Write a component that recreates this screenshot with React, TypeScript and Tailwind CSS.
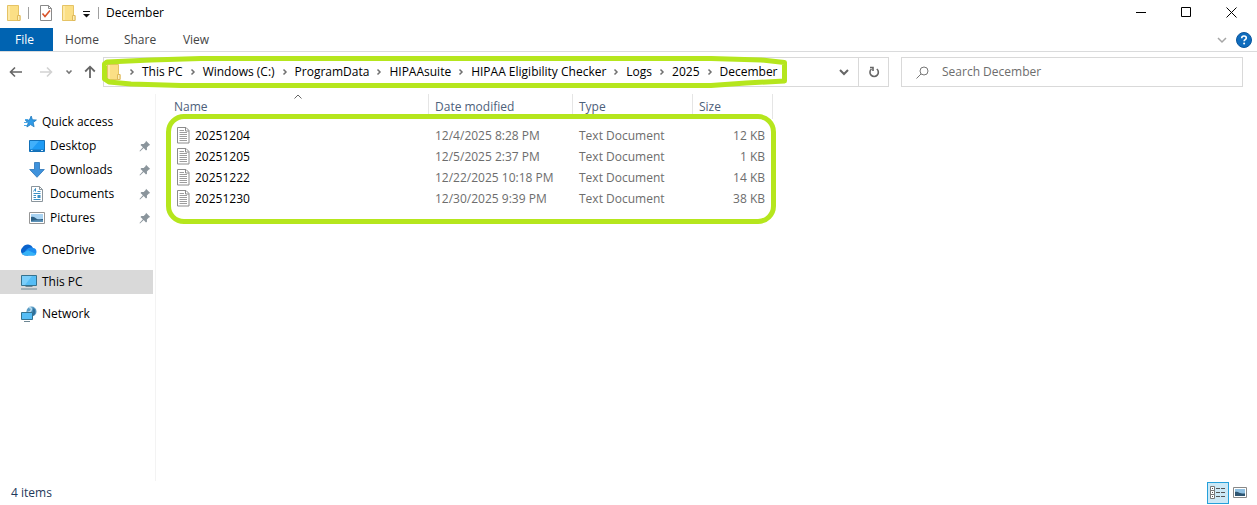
import type { ReactNode } from 'react';

interface LogFile {
  name: string;
  modified: string;
  type: string;
  size: string;
}

const files: LogFile[] = [
  { name: '20251204', modified: '12/4/2025 8:28 PM', type: 'Text Document', size: '12 KB' },
  { name: '20251205', modified: '12/5/2025 2:37 PM', type: 'Text Document', size: '1 KB' },
  { name: '20251222', modified: '12/22/2025 10:18 PM', type: 'Text Document', size: '14 KB' },
  { name: '20251230', modified: '12/30/2025 9:39 PM', type: 'Text Document', size: '38 KB' },
];

const crumbs = [
  'This PC',
  'Windows (C:)',
  'ProgramData',
  'HIPAAsuite',
  'HIPAA Eligibility Checker',
  'Logs',
  '2025',
  'December',
];

function FolderIcon() {
  return (
    <svg width="14" height="18" viewBox="0 0 14 18" className="shrink-0" aria-hidden="true">
      <path d="M.5 1.5h11v10h1.5v5H.5z" fill="#fbdf85" stroke="#e5c365" />
      <path d="M10.5 11.5h2.5v5h-2.5z" fill="#fdeeb4" stroke="#dfb95a" />
      <path d="M1 2h2v14H1z" fill="#fde9a6" />
    </svg>
  );
}

function CheckedPageIcon() {
  return (
    <svg width="14" height="18" viewBox="0 0 14 18" aria-hidden="true">
      <path d="M1.5 1.5h8l3 3v12h-11z" fill="#fff" stroke="#8a8a8a" />
      <path d="M9.5 1.5v3h3" fill="none" stroke="#8a8a8a" />
      <path d="m3.5 9.5 2.5 3L11 6.5" fill="none" stroke="#d9542b" strokeWidth="1.6" />
    </svg>
  );
}

function TextFileIcon() {
  return (
    <svg width="13" height="17" viewBox="0 0 13 17" className="shrink-0" aria-hidden="true">
      <path d="M.5.5h8.5l3 3v12.5H.5z" fill="#fff" stroke="#8c8c8c" />
      <path d="M8.5.5v3.5H12" fill="none" stroke="#8c8c8c" />
      <path d="M2.5 3.5H7M2.5 5.5h7.5M2.5 7.5h7.5M2.5 9.5h7.5M2.5 11.5h7.5M2.5 13.5h7.5" stroke="#9d9d9d" />
    </svg>
  );
}

function StarIcon() {
  return (
    <svg width="16" height="16" viewBox="0 0 16 16" aria-hidden="true">
      <path
        d="m10.2 2 1.2 3.8 4 .2-3.2 2.5.9 4.3-3.5-2.2-3.7 2.4 1.3-4.2-2.8-2.4 4-.4z"
        fill="#2f9be8"
        stroke="#1e78bd"
        strokeWidth=".8"
      />
      <path d="M4 5.5h3M3 8.5h3M3 11.5h3" stroke="#4aa8e8" />
    </svg>
  );
}

function DesktopIcon() {
  return (
    <svg width="16" height="16" viewBox="0 0 16 16" aria-hidden="true">
      <path d="M.5 2.5h15v11H.5z" fill="#1e9bf5" stroke="#1270b8" />
      <path d="M1 11.5h14V13H1z" fill="#1674bd" />
      <path d="M2 12.5h1.5m8.5 0h2" stroke="#d5ecff" />
      <path d="M1 3h9L3 11H1z" fill="#41b0fb" />
    </svg>
  );
}

function DownloadsIcon() {
  return (
    <svg width="16" height="16" viewBox="0 0 16 16" aria-hidden="true">
      <path d="M5.5.5h5v7h4.8L8 15.3.7 7.5h4.8z" fill="#3f92dc" stroke="#2b73b6" strokeWidth=".8" />
    </svg>
  );
}

function DocumentsIcon() {
  return (
    <svg width="16" height="16" viewBox="0 0 16 16" aria-hidden="true">
      <path d="M2.5.5h8l3 3v12h-11z" fill="#fff" stroke="#8a959c" />
      <path d="M10.5.5v3h3" fill="none" stroke="#8a959c" />
      <path d="M4.5 5.5 6.5 2.5v3M8.5 5.5h3M4.5 7.5h7M4.5 9.5h2.5M4.5 11.5h2.5M4.5 13.5h7" fill="none" stroke="#3a8fc4" />
      <path d="M8.5 9h3v3h-3z" fill="#3a8fc4" />
    </svg>
  );
}

function PictureIcon() {
  return (
    <svg width="16" height="16" viewBox="0 0 16 16" aria-hidden="true">
      <path d="M.5 2.5h15v11H.5z" fill="#fff" stroke="#969696" />
      <path d="M2 4h12v8H2z" fill="#a9d3f2" />
      <path d="M2 7c3-1 4 1 6 2s4-.5 6 0v3H2z" fill="#2d5f83" />
      <path d="M2 11c4-1.5 8 0 12-1v2H2z" fill="#5d93b9" />
    </svg>
  );
}

function OneDriveIcon() {
  return (
    <svg width="16" height="16" viewBox="0 0 16 16" aria-hidden="true">
      <path d="M4.500 13.500A4.600 4.600 0 0 1 1.500 5.500C2.800 3.300 5 2.300 7.200 2.500c2.500.2 4.300 1.900 4.800 4L7 13.500z" fill="#0a63cc" />
      <path d="M6 13.5 3 12c1-4 5-7.8 9-6A3.8 3.8 0 0 1 12.5 13.5z" fill="#1c8cf0" />
      <path d="M4.5 13.5C3 13.5 1.5 12.8.8 11.5l6.2-3.3L15.2 12c-.6 1-1.5 1.5-2.7 1.5z" fill="#35b2f7" />
    </svg>
  );
}

function ComputerIcon() {
  return (
    <svg width="16" height="16" viewBox="0 0 16 16" aria-hidden="true">
      <path d="M.5 1.5h15v10H.5z" fill="#56bdf5" stroke="#34728f" />
      <path d="M1 2h10L4 11H1z" fill="#7bcefa" />
      <path d="M4.5 12.5h7M0 15h16" stroke="#6d8794" />
    </svg>
  );
}

function NetworkIcon() {
  return (
    <svg width="16" height="16" viewBox="0 0 16 16" aria-hidden="true">
      <circle cx="10.5" cy="5.5" r="5" fill="#5b9cc4" />
      <path d="M8 1.5c2 0 3 1 2 3s-2 1-3.5 2" fill="none" stroke="#b9dcef" strokeWidth="1.5" />
      <path d="M12.5 2c2 1.5 2.5 4 1 7l-2 1V5z" fill="#2f6f9b" />
      <path d="M.5 6.5h11v7H.5z" fill="#56bdf5" stroke="#34728f" />
      <path d="M3 15.5h6" stroke="#6d8794" />
    </svg>
  );
}

function PinIcon() {
  return (
    <svg width="12" height="12" viewBox="0 0 12 12" className="shrink-0" aria-hidden="true">
      <path d="m7 .8 4.2 4.2-1.3.4-2 2 .1 2.3-1 .8-2.3-2.4L1 11.5l-.5-.4 3.4-3.9L1.5 5l.9-1 2.3.1 2-2z" fill="#8b959c" />
    </svg>
  );
}

interface ChevronProps {
  d: string;
  className: string;
  width?: number;
}

function Chevron({ d, className, width = 2 }: ChevronProps) {
  return (
    <svg width="10" height="10" viewBox="0 0 10 10" fill="none" stroke="currentColor" strokeWidth={width} className={className} aria-hidden="true">
      <path d={d} />
    </svg>
  );
}

interface NavItemProps {
  icon: ReactNode;
  label: string;
  nested?: boolean;
  selected?: boolean;
}

function NavItem({ icon, label, nested, selected }: NavItemProps) {
  return (
    <a
      href="#"
      className={`flex h-6 items-center gap-[5px] pr-[2px] ${nested ? 'pl-[29px]' : 'pl-[21px]'} ${selected ? 'bg-[#d9d9d9]' : ''}`}
    >
      {icon}
      <span className="flex-1">{label}</span>
      {nested && <PinIcon />}
    </a>
  );
}

function TitleBar() {
  return (
    <header className="flex h-7 items-center pb-[3px]">
      <div className="flex items-center pl-[7px]">
        <FolderIcon />
        <span className="ml-[7px] h-3 w-px bg-[#a0a0a0]" />
        <button type="button" aria-label="Properties" className="ml-[10px]">
          <CheckedPageIcon />
        </button>
        <button type="button" aria-label="New folder" className="ml-[9px]">
          <FolderIcon />
        </button>
        <button type="button" aria-label="Customize toolbar" className="ml-[6px]">
          <svg width="9" height="8" viewBox="0 0 9 8" className="mt-1">
            <path d="M1 .5h7" stroke="#111" />
            <path d="M1 3h7L4.5 6.5z" fill="#111" />
          </svg>
        </button>
        <span className="ml-[7px] h-3 w-px bg-[#a0a0a0]" />
        <h1 className="ml-[7px]">December</h1>
      </div>
      <div className="ml-auto flex pr-[3px]">
        <button type="button" aria-label="Minimize" className="flex w-[45px] justify-center">
          <svg width="11" height="11" viewBox="0 0 11 11" stroke="#000">
            <path d="M0 5.5h10" />
          </svg>
        </button>
        <button type="button" aria-label="Maximize" className="flex w-[45px] justify-center">
          <svg width="11" height="11" viewBox="0 0 11 11" fill="none" stroke="#000">
            <path d="M.5.5h9v9h-9z" />
          </svg>
        </button>
        <button type="button" aria-label="Close" className="flex w-[45px] justify-center">
          <svg width="11" height="11" viewBox="0 0 11 11" stroke="#000">
            <path d="m.5.5 10 10m0-10-10 10" />
          </svg>
        </button>
      </div>
    </header>
  );
}

function RibbonTabs() {
  return (
    <nav className="flex h-6 items-stretch border-b border-[#dadbdc] text-[#444]">
      <button type="button" className="w-[53px] bg-[#0063b1] pr-1 text-white">File</button>
      <button type="button" className="w-[58px]">Home</button>
      <button type="button" className="w-[58px]">Share</button>
      <button type="button" className="w-[54px]">View</button>
      <div className="ml-auto flex items-center gap-[9px] pr-[5px]">
        <button type="button" aria-label="Expand ribbon">
          <Chevron d="M1 3l4 4 4-4" className="text-[#a6a6a6]" width={1.5} />
        </button>
        <button type="button" aria-label="Help">
          <svg width="16" height="16" viewBox="0 0 16 16">
            <circle cx="8" cy="8" r="7.5" fill="#0f6cbd" stroke="#0a559c" />
            <path d="M5.7 6.2C5.7 4.7 6.7 4 8 4s2.3.8 2.3 2c0 1.6-2.2 1.7-2.2 3.3" fill="none" stroke="#fff" strokeWidth="1.6" />
            <circle cx="8.1" cy="11.5" r="1" fill="#fff" />
          </svg>
        </button>
      </div>
    </nav>
  );
}

function AddressBar() {
  return (
    <div className="flex h-[30px] items-stretch pr-[14px]">
      <div className="flex w-[103px] items-center pl-[9px] text-[#666]">
        <button type="button" aria-label="Back">
          <svg width="14" height="12" viewBox="0 0 14 12" fill="none" stroke="currentColor" strokeWidth="1.6">
            <path d="M13 6H1.5M6 1.5 1.5 6 6 10.5" />
          </svg>
        </button>
        <button type="button" aria-label="Forward" className="ml-4 text-[#d2d2d2]">
          <svg width="14" height="12" viewBox="0 0 14 12" fill="none" stroke="currentColor" strokeWidth="1.6">
            <path d="M1 6h11.5M8 1.5 12.5 6 8 10.5" />
          </svg>
        </button>
        <button type="button" aria-label="Recent locations" className="ml-[11px]">
          <Chevron d="M2.5 3.5 5 6l2.5-2.5" className="text-[#777]" width={1.6} />
        </button>
        <button type="button" aria-label="Up" className="ml-[10px]">
          <svg width="12" height="14" viewBox="0 0 12 14" fill="none" stroke="currentColor" strokeWidth="1.8">
            <path d="M6 13V1.5M1.2 6.5 6 1.7l4.8 4.8" />
          </svg>
        </button>
      </div>

      <div className="relative flex flex-1 items-center border border-[#d9d9d9] pl-[3px]">
        <FolderIcon />
        <ol className="flex items-center pl-px">
          {crumbs.map((crumb) => (
            <li key={crumb} className="flex items-center">
              <Chevron d="M3.5 2.5 6 5 3.5 7.5" className="mx-[5px] text-[#707070]" width={1.5} />
              <a href="#" className="whitespace-nowrap text-black">{crumb}</a>
            </li>
          ))}
        </ol>
        <button type="button" aria-label="Previous locations" className="ml-auto mr-[9px]">
          <Chevron d="M1 3l4 4 4-4" className="text-[#666]" />
        </button>
        <button type="button" aria-label="Refresh" className="flex h-full w-[30px] items-center justify-center border-l border-[#d9d9d9]">
          <svg width="12" height="12" viewBox="0 0 12 12" fill="none" stroke="#666" strokeWidth="1.6">
            <path d="M8.8 3A4.2 4.2 0 1 1 3.5 3M2 1.5h3v3.5" />
          </svg>
        </button>
        {/* Marker stroke around the path */}
        <svg width="688" height="34" viewBox="0 0 688 34" className="pointer-events-none absolute -left-[3px] -top-[3px]" fill="none" stroke="#b5e61d" strokeWidth="5" strokeLinejoin="round" aria-hidden="true">
          <path d="M6 7 50 5 100 3.5H610L660 5 683.5 7.5V26L645 28 610 30.5H80L30 29 8 27 3.5 24V9z" />
        </svg>
      </div>

      <label className="ml-3 flex w-[342px] items-center gap-[13px] border border-[#d9d9d9] pl-[14px]">
        <svg width="13" height="13" viewBox="0 0 13 13" fill="none" stroke="#777" className="shrink-0" aria-hidden="true">
          <circle cx="8" cy="5" r="4" />
          <path d="M5 8 .5 12.5" />
        </svg>
        <input type="text" aria-label="Search December" placeholder="Search December" className="w-full outline-none placeholder:text-[#6d6d6d]" />
      </label>
    </div>
  );
}

function Sidebar() {
  return (
    <aside className="flex w-[156px] shrink-0 flex-col gap-2 border-r border-[#f3f3f3] pr-[2px] pt-4 text-black">
      <div>
        <NavItem icon={<StarIcon />} label="Quick access" />
        <NavItem icon={<DesktopIcon />} label="Desktop" nested />
        <NavItem icon={<DownloadsIcon />} label="Downloads" nested />
        <NavItem icon={<DocumentsIcon />} label="Documents" nested />
        <NavItem icon={<PictureIcon />} label="Pictures" nested />
      </div>
      <NavItem icon={<OneDriveIcon />} label="OneDrive" />
      <NavItem icon={<ComputerIcon />} label="This PC" selected />
      <NavItem icon={<NetworkIcon />} label="Network" />
    </aside>
  );
}

function FileList() {
  return (
    <main className="flex-1 pl-3">
      <div className="relative w-[605px]">
        <table className="w-full table-fixed border-separate border-spacing-0 text-left">
          <colgroup>
            <col className="w-[261px]" />
            <col className="w-36" />
            <col className="w-[120px]" />
            <col className="w-20" />
          </colgroup>
          <thead className="text-[#4c607a]">
            <tr className="h-[25px]">
              <th className="relative border-r border-[#e5e5e5] pl-[6px] font-normal">
                Name
                <Chevron d="M1.5 6.5 5 3l3.5 3.5" className="absolute left-[125px] -top-[2px] text-[#666]" width={1} />
              </th>
              <th className="border-r border-[#e5e5e5] pl-[6px] font-normal">Date modified</th>
              <th className="border-r border-[#e5e5e5] pl-[6px] font-normal">Type</th>
              <th className="border-r border-[#e5e5e5] pl-[6px] font-normal">Size</th>
            </tr>
          </thead>
          <tbody className="text-[#6d6d6d] before:block before:h-1.5 before:content-['']">
            {files.map((file) => (
              <tr key={file.name} className="h-[21px]">
                <td className="pl-[9px] text-black">
                  <div className="flex items-center gap-[5px]">
                    <TextFileIcon />
                    {file.name}
                  </div>
                </td>
                <td className="pl-[6px]">{file.modified}</td>
                <td className="pl-[6px]">{file.type}</td>
                <td className="pr-2 text-right">{file.size}</td>
              </tr>
            ))}
          </tbody>
        </table>
        {/* Marker box around the log files */}
        <div className="pointer-events-none absolute -bottom-[15px] -left-[2px] -right-[3px] top-5 rounded-[18px] border-5 border-[#b5e61d]" />
      </div>
    </main>
  );
}

function StatusBar() {
  return (
    <footer className="flex h-6 items-center pl-[11px] pr-[10px] text-[#1e395b]">
      <span>4 items</span>
      <div className="ml-auto flex items-center gap-1">
        <button type="button" aria-label="Details view" className="flex size-[22px] items-center justify-center border border-[#26a0da] bg-[#cbe8f6]">
          <svg width="16" height="14" viewBox="0 0 16 14" fill="none">
            <path d="M.5.5h4v4h-4zM.5 4.5h4v4h-4zM.5 8.5h4v4h-4z" fill="#fff" stroke="#777" />
            <path d="M2 2.5h1M2 6.5h1M2 10.5h1M6 2.5h4m1 0h4M6 6.5h4m1 0h4M6 10.5h4m1 0h4" stroke="#555" />
          </svg>
        </button>
        <button type="button" aria-label="Large icons view">
          <svg width="14" height="12" viewBox="0 0 14 12">
            <path d="M.5.5h13v10H.5z" fill="#fff" stroke="#888" />
            <path d="M2 2h10v7H2z" fill="#8fc0e2" />
            <path d="M2 5c3-1 4 2 10 1.5V9H2z" fill="#2d5470" />
          </svg>
        </button>
      </div>
    </footer>
  );
}

export default function App() {
  return (
    <div className="flex min-h-screen flex-col bg-white font-['Open_Sans','Noto_Sans',sans-serif] text-xs text-black">
      <TitleBar />
      <RibbonTabs />
      <div className="flex flex-1 flex-col pt-[5px]">
        <AddressBar />
        <div className="flex flex-1 pt-[7px]">
          <Sidebar />
          <FileList />
        </div>
      </div>
      <StatusBar />
    </div>
  );
}
